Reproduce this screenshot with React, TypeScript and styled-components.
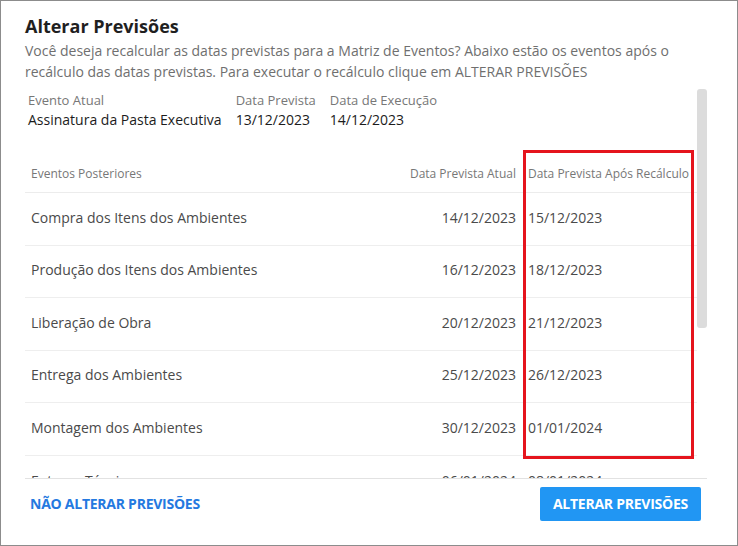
import styled, { createGlobalStyle } from 'styled-components'

const GlobalStyle = createGlobalStyle`
  html, body {
    margin: 0;
    padding: 0;
    background: #ffffff;
  }
  body {
    font-family: "Open Sans", "Noto Sans", Arial, sans-serif;
  }
`

const eventos = [
  { nome: 'Compra dos Itens dos Ambientes', atual: '14/12/2023', nova: '15/12/2023' },
  { nome: 'Produção dos Itens dos Ambientes', atual: '16/12/2023', nova: '18/12/2023' },
  { nome: 'Liberação de Obra', atual: '20/12/2023', nova: '21/12/2023' },
  { nome: 'Entrega dos Ambientes', atual: '25/12/2023', nova: '26/12/2023' },
  { nome: 'Montagem dos Ambientes', atual: '30/12/2023', nova: '01/01/2024' },
  { nome: 'Entrega Técnica', atual: '06/01/2024', nova: '08/01/2024' },
  { nome: 'Vistoria Final', atual: '10/01/2024', nova: '12/01/2024' },
  { nome: 'Encerramento do Contrato', atual: '15/01/2024', nova: '17/01/2024' },
]

function App() {
  return (
    <>
      <GlobalStyle />
      <Dialog>
        <Title>Alterar Previsões</Title>
        <Description>
          Você deseja recalcular as datas previstas para a Matriz de Eventos? Abaixo estão os eventos após o
          recálculo das datas previstas. Para executar o recálculo clique em ALTERAR PREVISÕES
        </Description>

        <ScrollFrame>
          <ScrollContent>
            <InfoBlock>
              <InfoColumn>
                <InfoLabel>Evento Atual</InfoLabel>
                <InfoValue>Assinatura da Pasta Executiva</InfoValue>
              </InfoColumn>
              <InfoColumn>
                <InfoLabel>Data Prevista</InfoLabel>
                <InfoValue>13/12/2023</InfoValue>
              </InfoColumn>
              <InfoColumn>
                <InfoLabel>Data de Execução</InfoLabel>
                <InfoValue>14/12/2023</InfoValue>
              </InfoColumn>
            </InfoBlock>

            <Table>
              <HeadCell>Eventos Posteriores</HeadCell>
              <HeadCell $align="right">Data Prevista Atual</HeadCell>
              <HeadCell $last>Data Prevista Após Recálculo</HeadCell>
              {eventos.map((ev) => (
                <Row key={ev.nome}>
                  <Cell>{ev.nome}</Cell>
                  <Cell $align="right">{ev.atual}</Cell>
                  <Cell $last>{ev.nova}</Cell>
                </Row>
              ))}
            </Table>
          </ScrollContent>
          <ScrollTrack>
            <ScrollThumb />
          </ScrollTrack>
        </ScrollFrame>

        <Footer>
          <TextButton>NÃO ALTERAR PREVISÕES</TextButton>
          <PrimaryButton>ALTERAR PREVISÕES</PrimaryButton>
        </Footer>

        <Highlight />
      </Dialog>
    </>
  )
}

export default App

const Dialog = styled.section`
  position: relative;
  box-sizing: border-box;
  width: 738px;
  height: 546px;
  border: 1px solid #8c8c8c;
  background: #ffffff;
  padding: 13px 30px 0 24px;
  display: flex;
  flex-direction: column;
  overflow: hidden;
`

const Title = styled.h2`
  margin: 0;
  font-size: 18px;
  line-height: 24px;
  font-weight: 700;
  color: #1f1f1f;
`

const Description = styled.p`
  margin: 2px 0 0;
  font-size: 14px;
  line-height: 21px;
  color: #6f6f6f;
`

const ScrollFrame = styled.div`
  margin-top: 6px;
  flex: 1;
  min-height: 0;
  display: flex;
  border-bottom: 1px solid #e2e2e2;
`

const ScrollContent = styled.div`
  flex: 1;
  min-width: 0;
  overflow: hidden;
`

const ScrollTrack = styled.div`
  width: 10px;
  flex: none;
  padding-top: 1px;
`

const ScrollThumb = styled.div`
  height: 239px;
  background: #dcdcdc;
  border-radius: 3px;
`

const InfoBlock = styled.div`
  display: flex;
  padding: 2px 3px 0;

  & > * + * {
    margin-left: 14px;
  }
`

const InfoColumn = styled.div`
  display: flex;
  flex-direction: column;
`

const InfoLabel = styled.span`
  font-size: 13px;
  line-height: 20px;
  color: #777777;
`

const InfoValue = styled.span`
  font-size: 14px;
  line-height: 20px;
  color: #1c1c1c;
`

const Table = styled.div`
  display: grid;
  grid-template-columns: 1fr auto auto;
  margin-top: 20px;
`

const Row = styled.div`
  display: contents;
`

type CellProps = { $align?: 'left' | 'right'; $last?: boolean }

const HeadCell = styled.div<CellProps>`
  padding: 15px ${(p) => (p.$last ? '8px' : '6px')} 9px 6px;
  font-size: 12px;
  line-height: 18px;
  color: #777777;
  text-align: ${(p) => p.$align || 'left'};
  border-bottom: 1px solid #ececec;
  white-space: nowrap;
`

const Cell = styled.div<CellProps>`
  padding: 14.6px ${(p) => (p.$last ? '8px' : '6px')} 17px 6px;
  font-size: 14px;
  line-height: 20px;
  color: #4a4a4a;
  text-align: ${(p) => p.$align || 'left'};
  border-bottom: 1px solid #eeeeee;
  white-space: nowrap;
`

const Footer = styled.div`
  display: flex;
  justify-content: space-between;
  align-items: center;
  padding: 7px 6px 24px 0;
`

const TextButton = styled.button`
  border: none;
  background: none;
  padding: 8px 5px;
  font-family: inherit;
  font-size: 14px;
  font-weight: 700;
  letter-spacing: -0.25px;
  color: #2479e0;
  cursor: pointer;
`

const PrimaryButton = styled.button`
  height: 34px;
  border: none;
  border-radius: 2px;
  background: #2196f3;
  padding: 0 13px;
  font-family: inherit;
  font-size: 14px;
  font-weight: 700;
  letter-spacing: -0.25px;
  color: #ffffff;
  cursor: pointer;
`

const Highlight = styled.div`
  position: absolute;
  left: 522px;
  top: 149px;
  width: 171px;
  height: 309px;
  box-sizing: border-box;
  border: 3px solid #e5141d;
  pointer-events: none;
`
